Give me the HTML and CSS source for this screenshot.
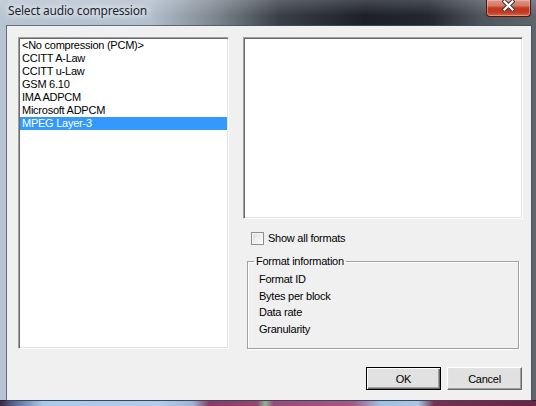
FILE: index.html
```html
<!DOCTYPE html>
<html>
<head>
<meta charset="utf-8">
<link rel="stylesheet" href="styles.css">
</head>
<body>
<div class="window">
  <div class="titlebar">
    <span class="title">Select audio compression</span>
    <div class="close">
      <svg width="13" height="11" viewBox="0 0 13 11">
        <path d="M2.5 1.5 L10.5 9.5 M10.5 1.5 L2.5 9.5" stroke="#3a3a3a" stroke-width="4.2" stroke-linecap="square" fill="none"/>
        <path d="M2.5 1.5 L10.5 9.5 M10.5 1.5 L2.5 9.5" stroke="#ffffff" stroke-width="2.2" stroke-linecap="square" fill="none"/>
      </svg>
    </div>
  </div>
  <div class="client">
    <div class="main">
      <div class="list sunken">
        <div class="row">&lt;No compression (PCM)&gt;</div>
        <div class="row">CCITT A-Law</div>
        <div class="row">CCITT u-Law</div>
        <div class="row">GSM 6.10</div>
        <div class="row">IMA ADPCM</div>
        <div class="row">Microsoft ADPCM</div>
        <div class="row selected">MPEG Layer-3</div>
      </div>
      <div class="right">
        <div class="preview sunken"></div>
        <label class="check"><span class="box"></span><span>Show all formats</span></label>
        <fieldset class="group">
          <legend>Format information</legend>
          <div class="info">Format ID</div>
          <div class="info">Bytes per block</div>
          <div class="info">Data rate</div>
          <div class="info">Granularity</div>
        </fieldset>
      </div>
    </div>
    <div class="buttons">
      <button class="btn default">OK</button>
      <button class="btn">Cancel</button>
    </div>
  </div>
</div>
<div class="desktop"></div>
</body>
</html>
```
FILE: styles.css
```css
html, body {
  margin: 0;
  padding: 0;
}
body {
  width: 536px;
  height: 406px;
  overflow: hidden;
  background: #2a1f35;
  font-family: "Liberation Sans", Arial, sans-serif;
  font-size: 11px;
  letter-spacing: -0.25px;
  color: #000;
}
.window {
  height: 401px;
  display: flex;
  flex-direction: column;
  background: linear-gradient(90deg, #b7c4d2 0%, #b2bfcd 28%, #7d8790 40%, #3a4047 52%, #1d2127 68%, #23282e 80%, #50565d 90%, #5f656c 100%);
  box-shadow: inset 0 -1px #20262c;
}
.titlebar {
  height: 26px;
  flex: none;
  display: flex;
  justify-content: space-between;
  align-items: flex-start;
  padding: 0 5px 0 8px;
  background: linear-gradient(180deg, rgba(255,255,255,0.18), rgba(255,255,255,0) 60%);
}
.title {
  font-family: "Noto Sans", "Open Sans", sans-serif;
  font-size: 12px;
  line-height: 14px;
  letter-spacing: -0.2px;
  margin-top: 4px;
  color: #1b2530;
  text-shadow: 0 0 6px #fff, 0 0 10px rgba(255,255,255,0.9), 0 0 14px rgba(255,255,255,0.7);
}
.close {
  width: 45px;
  height: 17px;
  box-sizing: border-box;
  border: 1px solid #4d1a12;
  border-top: none;
  border-radius: 0 0 4px 4px;
  background: linear-gradient(180deg, #dc998c 0%, #d27a68 35%, #c4391f 50%, #c2391f 75%, #d8674e 100%);
  box-shadow: inset 0 0 0 1px rgba(255,200,190,0.45);
  display: flex;
  justify-content: center;
  align-items: flex-start;
  padding-top: 0;
}
.close svg {
  display: block;
}
.client {
  flex: 1;
  margin: 0 5px 1px 7px;
  background: #f0f0f0;
  padding: 11px 8px 0 11px;
  box-shadow: 0 0 0 1px rgba(70,82,95,0.75);
}
.main {
  display: flex;
  gap: 14px;
  height: 312px;
}
.sunken {
  box-sizing: border-box;
  background: #fff;
  border: 1px solid;
  border-color: #a0a0a0 #ffffff #ffffff #a0a0a0;
  box-shadow: inset 1px 1px #696969, inset -1px -1px #e3e3e3;
  padding: 1px;
}
.list {
  width: 211px;
}
.row {
  height: 13px;
  line-height: 13px;
  padding-left: 2px;
  white-space: nowrap;
}
.row.selected {
  background: #3399ff;
  color: #fff;
}
.right {
  width: 280px;
  display: flex;
  flex-direction: column;
}
.preview {
  height: 182px;
  flex: none;
}
.check {
  display: flex;
  align-items: center;
  gap: 4px;
  height: 13px;
  margin: 13px 0 0 8px;
  line-height: 13px;
}
.box {
  width: 13px;
  height: 13px;
  box-sizing: border-box;
  border: 1px solid #8e8f8f;
  background: linear-gradient(135deg, #dcdcdc, #ffffff);
  box-shadow: inset 1px 1px #f4f4f4;
}
.group {
  flex: 1;
  margin: 10px 0 0 4px;
  width: 272px;
  box-sizing: border-box;
  min-width: 0;
  border: 1px solid #a0a0a0;
  box-shadow: inset 1px 1px #fff, 1px 1px #fff;
  padding: 3px 0 0 5px;
}
.group legend {
  padding: 0 2px;
  margin-left: 1px;
  line-height: 13px;
}
.info {
  height: 16.5px;
  line-height: 16.5px;
  padding-left: 6px;
}
.buttons {
  display: flex;
  justify-content: flex-end;
  gap: 6px;
  margin-top: 18px;
  padding-right: 1px;
}
.btn {
  width: 75px;
  height: 23px;
  box-sizing: border-box;
  font: inherit;
  letter-spacing: -0.25px;
  color: #000;
  padding: 0;
  border: 1px solid #696969;
  border-color: #ffffff #696969 #696969 #ffffff;
  background: #e1e1e1;
  box-shadow: inset -1px -1px #a0a0a0, inset 1px 1px #e3e3e3;
}
.btn.default {
  border: 1px solid #000;
  box-shadow: inset 1px 1px #fff, inset -1px -1px #696969, inset -2px -2px #a0a0a0;
}
.desktop {
  height: 5px;
  background: linear-gradient(90deg, #3b2a48 0%, #5a6e9a 3%, #a7c8ec 8%, #b0cdee 30%, #9cb4d6 36%, #8a3a68 39%, #95476f 48%, #8fb392 49.5%, #9a4a78 51%, #a65784 66%, #9fc0e4 71%, #a9c6e6 78%, #7a2d52 81%, #6b2446 100%);
}
```
